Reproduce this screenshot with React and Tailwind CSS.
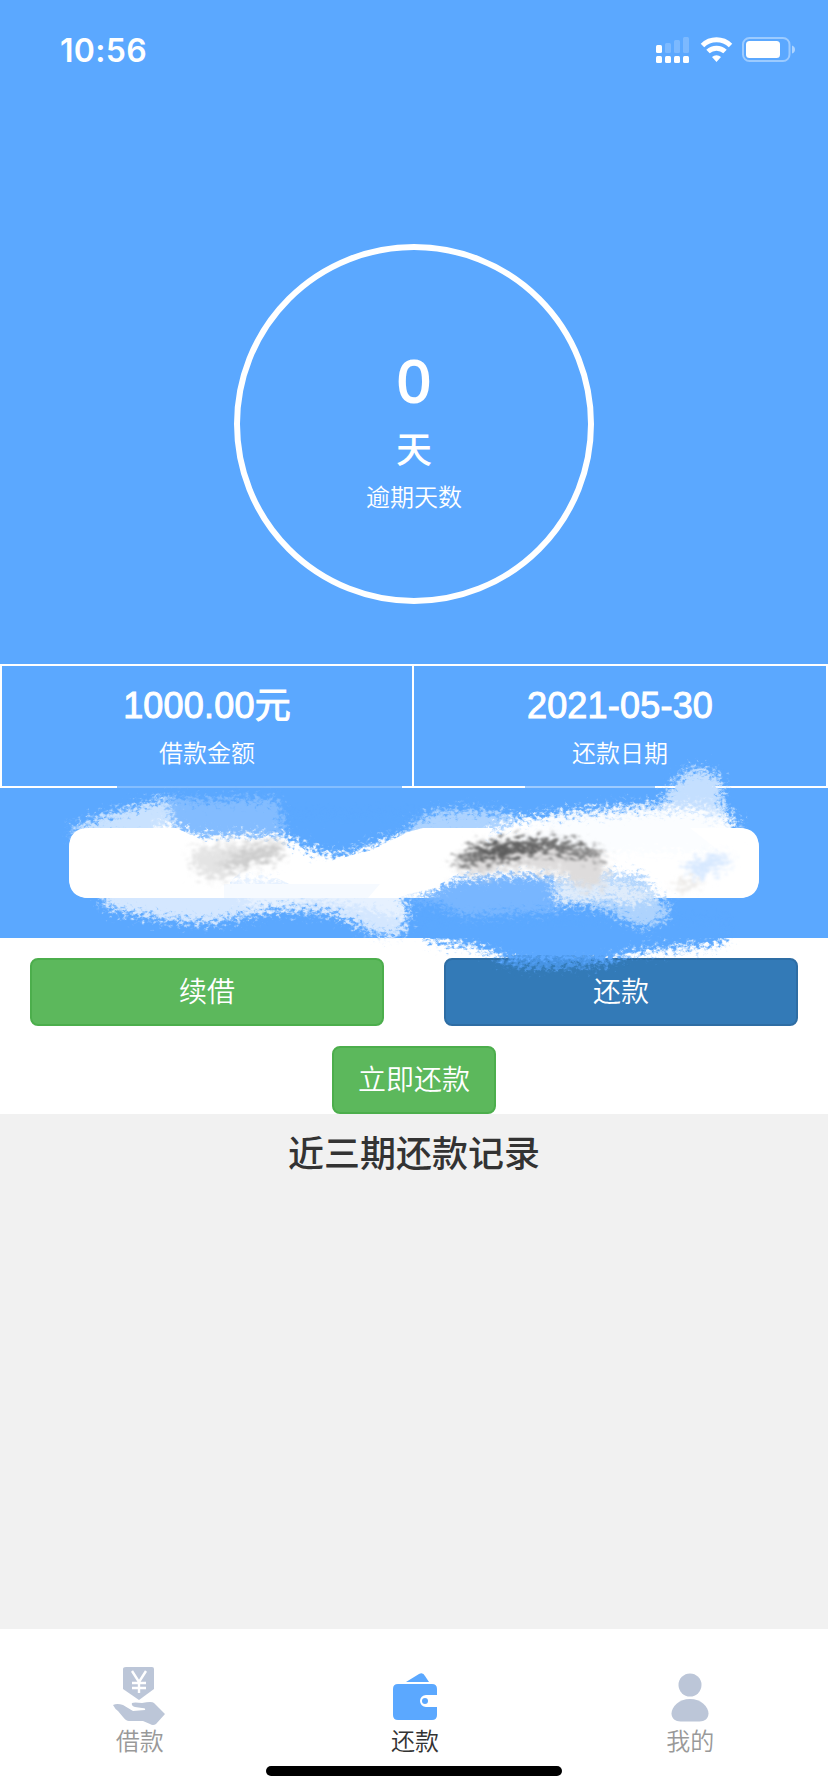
const tabs = [
  { label: '借款', icon: LoanIcon, active: false },
  { label: '还款', icon: WalletIcon, active: true },
  { label: '我的', icon: UserIcon, active: false },
];

const summary = [
  { value: '1000.00元', label: '借款金额' },
  { value: '2021-05-30', label: '还款日期' },
];

function LoanIcon() {
  return (
    <svg className="h-[60px] w-[54px]" viewBox="0 0 54 60">
      <path d="M13 2h26q2 0 2 2v20L26 35 10 24V4q0-2 3-2z" fill="#bcc6d8" />
      <path d="M19 6l7 11 7-11M26 17v11M19 18h14M19 23h14" fill="none" stroke="#fff" strokeWidth="2.4" />
      <path
        d="M0 40q4-2 10 0l10 6 12-1q1-2-3-2l-7-1q-4-1-3-4 2-1 10 0 10-2 12 0l11 11-9 10q-3 2-6 0l-7-3H16q-3 0-6-4L5 46Q2 44 0 40z"
        fill="#bcc6d8"
      />
    </svg>
  );
}

function WalletIcon() {
  return (
    <svg className="h-[60px] w-[44px]" viewBox="0 0 44 60">
      <path d="M13 17l13-8q4-2 6 2l4 6z" fill="#5ba8ff" />
      <path
        d="M5 19h34q5 0 5 5v6H33a6 6 0 0 0 0 12h11v8q0 5-5 5H5q-5 0-5-5V24q0-5 5-5z"
        fill="#5ba8ff"
      />
      <circle cx="32" cy="36" r="3" fill="#5ba8ff" />
    </svg>
  );
}

function UserIcon() {
  return (
    <svg className="h-[60px] w-[38px]" viewBox="0 0 38 60">
      <circle cx="19" cy="20" r="11.5" fill="#bcc6d8" />
      <path d="M19 34c11 0 18.500 8 18.500 14.500 0 5-4 8-9 8h-19c-5 0-9-3-9-8C.5 42 8 34 19 34z" fill="#bcc6d8" />
    </svg>
  );
}

function StatusBar() {
  return (
    <div className="flex h-[100px] items-center justify-between pl-[60px] pr-[33px] text-white">
      <span className="pt-0.5 font-[Inter] text-[32px] font-semibold leading-none tracking-[0.3px]">10:56</span>
      <svg className="h-[30px] w-[140px]" viewBox="0 0 140 30" fill="#fff">
        <rect x="1" y="10" width="6" height="8" rx="1.5" />
        <g opacity=".2">
          <rect x="10" y="8" width="6" height="10" rx="1.5" />
          <rect x="19" y="5" width="6" height="13" rx="1.5" />
          <rect x="28" y="2" width="6" height="16" rx="1.5" />
        </g>
        <rect x="1" y="21" width="6" height="7" rx="1.5" />
        <rect x="10" y="21" width="6" height="7" rx="1.5" />
        <rect x="19" y="21" width="6" height="7" rx="1.5" />
        <rect x="28" y="21" width="6" height="7" rx="1.5" />
        <g fill="none" stroke="#fff" strokeWidth="5">
          <path d="M47.5 10.5a20 20 0 0 1 28 0" />
          <path d="M53 16.500a12.500 12.500 0 0 1 17 0" />
        </g>
        <path d="M57 22a6.500 6.500 0 0 1 9 0L61.500 27z" />
        <rect x="88" y="3" width="46.5" height="23" rx="6.5" fill="none" stroke="#fff" strokeOpacity=".4" strokeWidth="2" />
        <rect x="91" y="6" width="34" height="17" rx="3.5" />
        <path d="M137 10.500q3 1 3 4t-3 4z" opacity=".5" />
      </svg>
    </div>
  );
}

// Brush strokes painted over the account row
function BrushStrokes() {
  return (
    <svg
      className="pointer-events-none absolute left-0 top-[750px] h-[230px] w-[828px]"
      viewBox="0 750 828 230"
    >
      <defs>
        <filter id="rough" x="-10%" y="-30%" width="120%" height="160%" colorInterpolationFilters="sRGB">
          <feGaussianBlur in="SourceGraphic" stdDeviation="3" result="s" />
          <feTurbulence type="fractalNoise" baseFrequency=".22 .28" numOctaves="3" seed="4" result="n" />
          <feDisplacementMap in="s" in2="n" scale="28" xChannelSelector="R" yChannelSelector="G" />
          <feGaussianBlur stdDeviation=".7" />
        </filter>
        <filter id="smudge" x="-30%" y="-60%" width="160%" height="220%" colorInterpolationFilters="sRGB">
          <feGaussianBlur in="SourceGraphic" stdDeviation="3" result="s" />
          <feTurbulence type="fractalNoise" baseFrequency=".14 .26" numOctaves="3" seed="9" result="n" />
          <feDisplacementMap in="s" in2="n" scale="30" xChannelSelector="R" yChannelSelector="G" />
          <feGaussianBlur stdDeviation=".8" />
        </filter>
        <linearGradient id="fade" x1="0" y1="0" x2="0" y2="1">
          <stop offset="0" stopColor="#c4dfff" />
          <stop offset=".5" stopColor="#fff" />
        </linearGradient>
      </defs>

      <rect x="117" y="786" width="285" height="2" fill="#5ba8ff" opacity=".75" />
      <rect x="525" y="786" width="130" height="2" fill="#5ba8ff" opacity=".6" />

      <g filter="url(#rough)">
        <path d="M178 815H415L410 832 372 846 342 857 305 848 285 841H200L182 834z" fill="#5ba8ff" />
        <path d="M412 920h314v20l-12 5-45 4-35 4-32 10-56 4-31-3-22-11-20-7-42-6z" fill="#5ba8ff" />
        <path d="M70 830L98 818 132 808 168 797 176 812 184 838H80z" fill="#c9e2ff" />
        <path d="M166 797L205 801 245 799 278 800 284 822 280 836 200 834 175 826z" fill="#83bcff" />
        <path d="M160 824l40 12h84l24 13 28 8-30 18-100-12-55-22z" fill="#fff" />
        <path d="M98 880l8 28 48 10 50 5 48-8 22-5 56 3 32 14 24 10 17-4 6-16-10-29z" fill="#d4e7ff" />
        <path d="M220 880h170l16 24-5 14-40-11-45-7-60 7z" fill="#e6f1ff" />

        <path d="M408 828l22-15 38-3 34 3 35 8-8 17H405z" fill="#add3ff" />
        <path d="M655 812l20-30 15-13 22 2 10 12-1 20 18 22-10 12z" fill="#c4dfff" />
        <path d="M470 840l48-20 40-7 60-6 65-5 35 1 16 24-18 20H488z" fill="url(#fade)" />
        <path d="M515 842l55-24 70-6 60-3 15 20 10 24H500z" fill="#fbfdff" />

        <path d="M404 900l22-5 28-16 48-4 54 1 14 26-8 9-62 3-30 3-24-8-12-7z" fill="#78b6ff" />
        <path d="M550 880l56-7 38 4 12 20 13 8-3 13-17 9-16-3-28-14-50-8z" fill="#aed3fd" />
        <path d="M555 888l45-9 42 10 14 10-28 5-20-6-52 4z" fill="#dfecfb" />
      </g>

      {/* clean parts of the pill */}
      <path d="M69 848q0-20 20-20h87l30 14h64l-40 40v16H89q-20 0-20-20z" fill="#fff" />
      <path d="M372 850l36-18 15-4h70l-25 40-35 20-25 6-10 4h-80l-45-22z" fill="#fff" />
      <path d="M224 884h156l-12 14H224z" fill="#f6faff" />
      <path d="M690 828h49q20 0 20 20v30q0 20-20 20h-65l26-16 30-22z" fill="#fff" />

      <g filter="url(#smudge)">
        <path d="M190 850l45-7 50-2-3 18-36 6-28 16-22-8z" fill="#e4e4e4" />
        <path d="M214 866l30-15 38-7-7 14-38 10z" fill="#cbcbcb" />
        <path d="M456 866l20-16 45-5 55 1 30 10-1 28-22 6-22-16-42-6-48 8z" fill="#dedcdc" />
        <path d="M453 864l20-18 32-6 53-1 40 11 4 9-27-3-37-6-48 5-24 12z" fill="#777" />
        <path d="M475 852l50-8 50 3-46 6-43 8z" fill="#555" />
        <path d="M685 866l26-11 24 2-14 12-30 10z" fill="#d6e8ff" />
        <path d="M672 885l23-5 7 4-24 5z" fill="#e2deda" />
      </g>
      <g filter="url(#rough)">
        <path d="M500 958h124l-30 5-45 4-44-3z" fill="#4490df" />
      </g>
    </svg>
  );
}

export default function App() {
  return (
    <div className="relative flex h-[1792px] w-[828px] flex-col overflow-hidden bg-white font-['Helvetica_Neue','Liberation_Sans','Noto_Sans_CJK_SC',sans-serif]">
      <div className="h-[938px] bg-[#5ba8ff] text-white">
        <StatusBar />

        <div className="mx-auto mt-36 flex h-[360px] w-[360px] flex-col items-center rounded-full border-6 border-white pt-[99px]">
          <h1 className="text-[60px] leading-[66px] [-webkit-text-stroke:1.8px_#fff]">0</h1>
          <h2 className="mt-4 text-4xl font-medium leading-10">天</h2>
          <p className="mt-2.5 text-2xl font-[350] leading-[34px]">逾期天数</p>
        </div>

        <div className="mt-[60px] flex h-[124px] border-2 border-white">
          {summary.map((item, index) => (
            <div
              key={item.label}
              className={`flex flex-col items-center pt-5 ${index === 0 ? 'w-[412px] border-r-2 border-white' : 'flex-1'}`}
            >
              <h2 className="text-4xl leading-10 tracking-[0.2px] [-webkit-text-stroke:1px_#fff]">{item.value}</h2>
              <p className="mt-[11px] text-2xl font-[350] leading-[34px]">{item.label}</p>
            </div>
          ))}
        </div>

        <div className="mx-auto mt-10 h-[70px] w-[690px] rounded-[20px] bg-white" />
      </div>

      <div className="h-44 px-[30px] pt-5">
        <div className="flex justify-between text-[28px] font-[350] text-white">
          <button className="h-[68px] w-[354px] rounded-lg border-2 border-[#4cae4c] bg-[#5cb85c] pt-0.5">续借</button>
          <button className="h-[68px] w-[354px] rounded-lg border-2 border-[#2e6da4] bg-[#337ab7] pt-0.5">还款</button>
        </div>
        <button className="mx-auto mt-5 block h-[68px] w-[164px] rounded-lg border-2 border-[#4cae4c] bg-[#5cb85c] pt-0.5 text-[28px] font-[350] text-white">
          立即还款
        </button>
      </div>

      <div className="h-[515px] bg-[#f1f1f1] pt-[21px]">
        <h2 className="text-center text-4xl font-medium leading-10 text-[#333]">近三期还款记录</h2>
      </div>

      <div className="grid grid-cols-3 pl-0.5 pt-9">
        {tabs.map((tab) => (
          <div key={tab.label} className="flex flex-col items-center">
            <tab.icon />
            <span className={`text-2xl font-[350] leading-[34px] ${tab.active ? 'text-[#333]' : 'text-[#999]'}`}>
              {tab.label}
            </span>
          </div>
        ))}
      </div>
      <div className="mx-auto mt-[7px] h-2.5 w-[296px] rounded-full bg-black" />

      <BrushStrokes />
    </div>
  );
}
